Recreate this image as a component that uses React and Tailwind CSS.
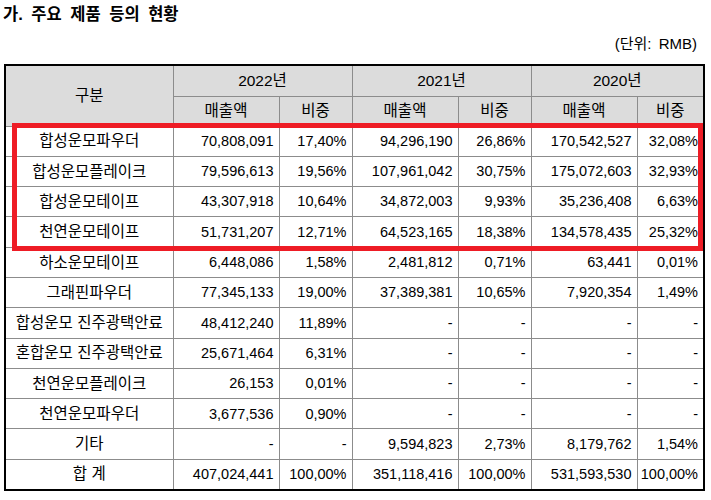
const rows = [
  ["합성운모파우더", "70,808,091", "17,40%", "94,296,190", "26,86%", "170,542,527", "32,08%"],
  ["합성운모플레이크", "79,596,613", "19,56%", "107,961,042", "30,75%", "175,072,603", "32,93%"],
  ["합성운모테이프", "43,307,918", "10,64%", "34,872,003", "9,93%", "35,236,408", "6,63%"],
  ["천연운모테이프", "51,731,207", "12,71%", "64,523,165", "18,38%", "134,578,435", "25,32%"],
  ["하소운모테이프", "6,448,086", "1,58%", "2,481,812", "0,71%", "63,441", "0,01%"],
  ["그래핀파우더", "77,345,133", "19,00%", "37,389,381", "10,65%", "7,920,354", "1,49%"],
  ["합성운모 진주광택안료", "48,412,240", "11,89%", "-", "-", "-", "-"],
  ["혼합운모 진주광택안료", "25,671,464", "6,31%", "-", "-", "-", "-"],
  ["천연운모플레이크", "26,153", "0,01%", "-", "-", "-", "-"],
  ["천연운모파우더", "3,677,536", "0,90%", "-", "-", "-", "-"],
  ["기타", "-", "-", "9,594,823", "2,73%", "8,179,762", "1,54%"],
  ["합 계", "407,024,441", "100,00%", "351,118,416", "100,00%", "531,593,530", "100,00%"],
];

const font = { fontFamily: '"Liberation Sans", "Noto Sans CJK KR", sans-serif' };
const cell = "border border-[#8c8c8c]";
const head = "border border-[#8c8c8c] font-normal text-center text-[15.5px]";

export default function App() {
  return (
    <div className="w-[711px] h-[500px] bg-white text-black overflow-hidden" style={font}>
      {/* title */}
      <div className="pl-[3px] pt-[4px] text-[16.5px] font-bold leading-[20px] [word-spacing:4px]">
        가. 주요 제품 등의 현황
      </div>
      <div className="mt-[10px] pr-[14px] text-right text-[15px] leading-[20px] [word-spacing:3px]">(단위: RMB)</div>

      <div className="relative mt-[10px] ml-[4px] w-[699px]">
        <table className="w-full table-fixed border-collapse border-2 border-black text-[14.5px] leading-none">
          <colgroup>
            <col className="w-[168px]" />
            <col className="w-[106px]" />
            <col className="w-[73px]" />
            <col className="w-[106px]" />
            <col className="w-[73px]" />
            <col className="w-[106px]" />
            <col className="w-[67px]" />
          </colgroup>
          <thead>
            <tr className="h-[31px] bg-[#dcdcdc]">
              <th rowSpan={2} className={head}>구분</th>
              <th colSpan={2} className={head}>2022년</th>
              <th colSpan={2} className={head}>2021년</th>
              <th colSpan={2} className={head}>2020년</th>
            </tr>
            <tr className="h-[30px] bg-[#dcdcdc]">
              <th className={head}>매출액</th>
              <th className={head}>비중</th>
              <th className={head}>매출액</th>
              <th className={head}>비중</th>
              <th className={head}>매출액</th>
              <th className={head}>비중</th>
            </tr>
          </thead>
          <tbody>
            {rows.map((r, i) => (
              <tr key={i} className="h-[30.3px]">
                <td className={`${cell} text-center text-[15.5px] whitespace-nowrap`}>{r[0]}</td>
                {r.slice(1).map((v, j) => (
                  <td key={j} className={`${cell} text-right pr-[5px] whitespace-nowrap`}>
                    {v}
                  </td>
                ))}
              </tr>
            ))}
          </tbody>
        </table>
        {/* highlight box */}
        <div className="absolute left-[8px] top-[59px] w-[691px] h-[128px] border-[5px] border-[#ee1c25] pointer-events-none" />
      </div>
    </div>
  );
}
